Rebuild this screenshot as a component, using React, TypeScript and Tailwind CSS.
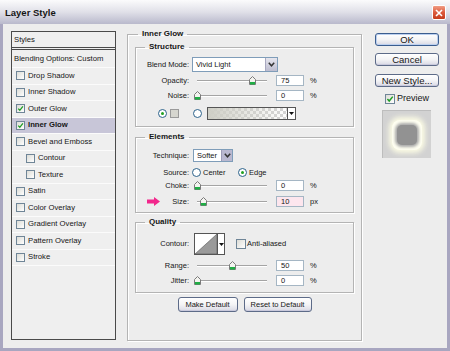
import React from "react";

const effects = [
  { name: "Drop Shadow" },
  { name: "Inner Shadow" },
  { name: "Outer Glow", on: true },
  { name: "Inner Glow", on: true, active: true },
  { name: "Bevel and Emboss" },
  { name: "Contour", sub: true },
  { name: "Texture", sub: true },
  { name: "Satin" },
  { name: "Color Overlay" },
  { name: "Gradient Overlay" },
  { name: "Pattern Overlay" },
  { name: "Stroke" },
];

function CheckMark() {
  return (
    <svg viewBox="0 0 9 9" className="w-full h-full">
      <path d="M1.6 4.6 L3.6 6.8 L7.6 1.8" fill="none" stroke="#1f9e24" strokeWidth="1.7" />
    </svg>
  );
}

function Check({ on, big }: { on?: boolean; big?: boolean }) {
  return (
    <span
      className={
        (big ? "w-[10px] h-[10px] " : "w-[9px] h-[9px] ") +
        "shrink-0 border border-[#6f8597] bg-gradient-to-br from-[#dcdcd6] to-white flex"
      }
    >
      {on && <CheckMark />}
    </span>
  );
}

function Radio({ on }: { on?: boolean }) {
  return (
    <span className="w-[9px] h-[9px] shrink-0 rounded-full border border-[#2c628b] bg-white flex items-center justify-center">
      {on && <span className="w-[3px] h-[3px] rounded-full bg-[#21a121]" />}
    </span>
  );
}

function Thumb() {
  return (
    <svg width="7" height="9" viewBox="0 0 7 9">
      <path d="M0.5 3.5 L3.5 0.5 L6.5 3.5 V8.5 H0.5 Z" fill="#f4f4f0" stroke="#7a7a7a" />
      <rect x="1" y="6" width="5" height="2.5" fill="#1fae45" />
    </svg>
  );
}

function Slider({ pct }: { pct: number }) {
  return (
    <div className="relative w-[76px] h-[11px] ml-[5px] flex items-center">
      <div className="mx-[3px] flex-1 h-[2px] border-t border-[#a4a4a4] border-b border-b-white" />
      <div className="absolute top-[1px]" style={{ left: 3 + (pct * 70) / 100 - 3.5 }}>
        <Thumb />
      </div>
    </div>
  );
}

function Field({ value, pink }: { value: string; pink?: boolean }) {
  return (
    <div
      className={
        (pink ? "bg-[#fde6ee] " : "bg-white ") +
        "ml-[6px] w-[28px] h-[11px] border border-[#a5b6c4] pl-[4px] text-[7.5px] leading-[10px]"
      }
    >
      {value}
    </div>
  );
}

function Label({ children }: { children: React.ReactNode }) {
  return <div className="w-[53px] shrink-0 text-right text-[7.5px]">{children}</div>;
}

function SliderRow({ label, value, pct, unit, pink, extra }: { label: string; value: string; pct: number; unit: string; pink?: boolean; extra?: React.ReactNode }) {
  return (
    <div className="flex items-center h-[11px]">
      {extra ? (
        <div className="w-[53px] shrink-0 pl-[11px] flex items-center justify-between text-[7.5px]">
          {extra}
          <span>{label}</span>
        </div>
      ) : (
        <Label>{label}</Label>
      )}
      <Slider pct={pct} />
      <Field value={value} pink={pink} />
      <span className="ml-[6px] text-[7.5px]">{unit}</span>
    </div>
  );
}

function Chevron() {
  return (
    <svg width="7" height="5" viewBox="0 0 7 5">
      <path d="M0.8 0.8 L3.5 3.8 L6.2 0.8" fill="none" stroke="#333" strokeWidth="1.5" />
    </svg>
  );
}

function Group({ title, children, className }: { title: string; children: React.ReactNode; className: string }) {
  return (
    <fieldset className={"border border-[#b4b4b4] shadow-[inset_1px_1px_0_#fff,1px_1px_0_#fff] min-w-0 " + className}>
      <legend className="ml-[9px] px-[4px] text-[8px] leading-[10px] font-bold">{title}</legend>
      {children}
    </fieldset>
  );
}

function XpButton({ children, main }: { children: React.ReactNode; main?: boolean }) {
  return (
    <div
      className={
        (main ? "border-[#3b5d8f] shadow-[inset_0_0_0_1px_#bcd0ef] " : "border-[#5d6b88] shadow-[inset_0_-1px_0_#c9c9dc] ") +
        "h-[13px] w-[64px] rounded-[3px] border bg-gradient-to-b from-white via-[#f4f4f6] to-[#d9d9e4] flex items-center justify-center text-[9.5px] leading-none"
      }
    >
      {children}
    </div>
  );
}

function SmallButton({ children, w }: { children: React.ReactNode; w: string }) {
  return (
    <div
      className={
        w +
        " h-[15px] rounded-[3px] border border-[#5d6b88] bg-gradient-to-b from-white via-[#f4f4f6] to-[#d9d9e4] shadow-[inset_0_-1px_0_#c9c9dc] flex items-center justify-center text-[7.5px]"
      }
    >
      {children}
    </div>
  );
}

export default function App() {
  return (
    <div className="w-[450px] h-[351px] bg-[#a8a6c0] font-['Liberation_Sans',Arial,sans-serif] text-[#161616] overflow-hidden">
      {/* title bar */}
      <div className="h-[24px] flex items-center justify-between pl-[5px] pr-[4px] bg-gradient-to-b from-[#fbfbfc] via-[#e0e0e8] to-[#b9b9cc]">
        <span className="text-[9.5px] font-bold pt-[2px]">Layer Style</span>
        <div className="w-[14px] h-[15px] mt-[1px] rounded-[2px] border border-white bg-gradient-to-b from-[#f09c84] via-[#dc5a3c] to-[#c43c1c] flex items-center justify-center">
          <svg width="8" height="8" viewBox="0 0 8 8">
            <path d="M1 1 L7 7 M7 1 L1 7" stroke="white" strokeWidth="1.6" />
          </svg>
        </div>
      </div>

      <div className="mx-[3px] h-[324px] bg-[#ededed] flex items-start pl-[8px]">
        {/* style list */}
        <div className="mt-[7px] w-[105px] h-[309px] border border-[#4a4a4a] bg-[#efefef] flex flex-col text-[7.7px]">
          <div className="h-[18px] flex items-center pl-[2px] border-b-[3px] border-double border-[#4a4a4a]">Styles</div>
          <div className="h-[18px] flex items-center pl-[2px] border-b border-[#fbfbfb]">Blending Options: Custom</div>
          {effects.map((e) => (
            <div
              key={e.name}
              className={
                (e.active ? "bg-[#c8c6d8] font-bold " : "") +
                (e.sub ? "pl-[14px] " : "pl-[4px] ") +
                "h-[16.5px] flex items-center gap-[3px] border-b border-[#fbfbfb]"
              }
            >
              <Check on={e.on} />
              <span>{e.name}</span>
            </div>
          ))}
        </div>

        {/* inner glow options */}
        <fieldset className="mt-[5px] ml-[11px] w-[235px] h-[312px] px-[7px] pt-[3px] border border-[#b4b4b4] shadow-[inset_1px_1px_0_#fff,1px_1px_0_#fff] min-w-0">
          <legend className="ml-[3px] px-[4px] text-[8px] leading-[10px] font-bold">Inner Glow</legend>

          <Group title="Structure" className="pb-[6px]">
            <div className="flex items-center h-[15px] mt-[5px]">
              <Label>Blend Mode:</Label>
              <div className="ml-[3px] w-[86px] h-[15px] bg-white border border-[#7f9db9] flex items-center">
                <span className="flex-1 pl-[3px] text-[7.5px]">Vivid Light</span>
                <span className="w-[12px] h-[13px] bg-gradient-to-b from-[#e6e6ee] to-[#bdbdd0] border-l border-[#a8a8c0] flex items-center justify-center">
                  <Chevron />
                </span>
              </div>
            </div>
            <div className="mt-[3px]">
              <SliderRow label="Opacity:" value="75" pct={79} unit="%" />
            </div>
            <div className="mt-[4px]">
              <SliderRow label="Noise:" value="0" pct={0} unit="%" />
            </div>
            <div className="flex items-center h-[13px] mt-[6px] pl-[22px]">
              <Radio on />
              <span className="ml-[3px] w-[9px] h-[9px] bg-[#d6d6cf] border border-[#9a9a9a]" />
              <span className="ml-[14px]">
                <Radio />
              </span>
              <div className="ml-[5px] w-[89px] h-[13px] border border-[#555] flex">
                <svg width="79" height="11" viewBox="0 0 79 11">
                  <defs>
                    <pattern id="chk" width="6" height="6" patternUnits="userSpaceOnUse">
                      <rect width="6" height="6" fill="#ffffff" />
                      <rect width="3" height="3" fill="#d4d4d4" />
                      <rect x="3" y="3" width="3" height="3" fill="#d4d4d4" />
                    </pattern>
                    <linearGradient id="gl" x1="0" x2="1" y1="0" y2="0">
                      <stop offset="0" stopColor="#cfcfc6" stopOpacity="1" />
                      <stop offset="1" stopColor="#cfcfc6" stopOpacity="0" />
                    </linearGradient>
                  </defs>
                  <rect width="79" height="11" fill="url(#chk)" />
                  <rect width="79" height="11" fill="url(#gl)" />
                </svg>
                <span className="flex-1 border-l border-[#555] bg-white flex items-center justify-center">
                  <svg width="5" height="3" viewBox="0 0 5 3">
                    <path d="M0 0 H5 L2.5 3 Z" fill="#111" />
                  </svg>
                </span>
              </div>
            </div>
          </Group>

          <Group title="Elements" className="mt-[5px] pb-[5px]">
            <div className="flex items-center h-[13px] mt-[7px]">
              <Label>Technique:</Label>
              <div className="ml-[4px] w-[40px] h-[13px] bg-white border border-[#7f9db9] flex items-center">
                <span className="flex-1 pl-[3px] text-[7.5px]">Softer</span>
                <span className="w-[11px] h-[11px] bg-[#b9b8d0] border-l border-[#9d9cb8] flex items-center justify-center">
                  <Chevron />
                </span>
              </div>
            </div>
            <div className="flex items-center h-[11px] mt-[5px] text-[7.5px]">
              <Label>Source:</Label>
              <div className="ml-[3px] w-[46px] flex items-center gap-[2px]">
                <Radio />
                <span>Center</span>
              </div>
              <div className="flex items-center gap-[2px]">
                <Radio on />
                <span>Edge</span>
              </div>
            </div>
            <div className="mt-[2px]">
              <SliderRow label="Choke:" value="0" pct={0} unit="%" />
            </div>
            <div className="mt-[5px]">
              <SliderRow
                label="Size:"
                value="10"
                pct={9}
                unit="px"
                pink
                extra={
                  <svg width="13" height="9" viewBox="0 0 13 9">
                    <path d="M0 2.5 H7 V0 L13 4.5 L7 9 V6.5 H0 Z" fill="#f2278c" />
                  </svg>
                }
              />
            </div>
          </Group>

          <Group title="Quality" className="mt-[4px] pb-[6px]">
            <div className="flex items-center h-[22px] mt-[6px] text-[7.5px]">
              <Label>Contour:</Label>
              <div className="ml-[5px] h-[22px] flex border border-[#555]">
                <svg width="22" height="20" viewBox="0 0 22 20">
                  <rect width="22" height="20" fill="#fff" />
                  <path d="M0 20 L22 0 V20 Z" fill="#9a9a9a" stroke="#555" strokeWidth="0.6" />
                </svg>
                <span className="w-[7px] border-l border-[#555] bg-white flex items-center justify-center">
                  <svg width="5" height="3" viewBox="0 0 5 3">
                    <path d="M0 0 H5 L2.5 3 Z" fill="#111" />
                  </svg>
                </span>
              </div>
              <div className="ml-[11px] flex items-center gap-[1px]">
                <Check big />
                <span>Anti-aliased</span>
              </div>
            </div>
            <div className="mt-[5px]">
              <SliderRow label="Range:" value="50" pct={50} unit="%" />
            </div>
            <div className="mt-[4px]">
              <SliderRow label="Jitter:" value="0" pct={0} unit="%" />
            </div>
          </Group>

          <div className="mt-[4px] flex justify-center gap-[6px]">
            <SmallButton w="w-[60px]">Make Default</SmallButton>
            <SmallButton w="w-[68px]">Reset to Default</SmallButton>
          </div>
        </fieldset>

        {/* buttons + preview */}
        <div className="ml-[13px] mt-[9px] w-[64px] flex flex-col">
          <XpButton main>OK</XpButton>
          <div className="mt-[7px]">
            <XpButton>Cancel</XpButton>
          </div>
          <div className="mt-[8px]">
            <XpButton>New Style...</XpButton>
          </div>
          <div className="mt-[6px] h-[11px] ml-[10px] flex items-center gap-[2px] text-[9px]">
            <Check on big />
            <span>Preview</span>
          </div>
          <div className="mt-[6px] ml-[7px] w-[49px] h-[48px] bg-[#d2d2d2] border-t border-l border-[#bdbdbd] flex items-center justify-center">
            <div className="w-[30px] h-[30px] rounded-[8px] bg-[#fffff2] shadow-[0_0_5px_3px_#fbfbe4] flex items-center justify-center">
              <div className="w-[20px] h-[20px] rounded-[5px] bg-[#929292] shadow-[0_0_3px_2px_#a8a8a8]" />
            </div>
          </div>
        </div>
      </div>
    </div>
  );
}
